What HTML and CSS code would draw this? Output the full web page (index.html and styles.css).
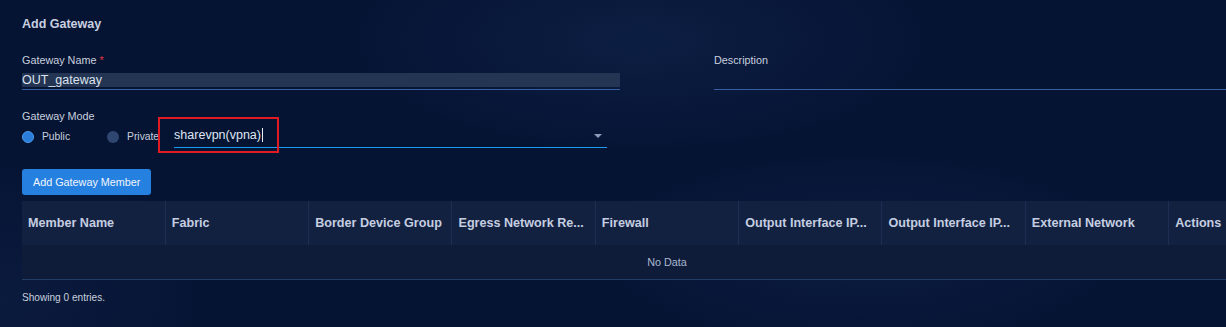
FILE: index.html
```html
<!DOCTYPE html>
<html lang="en">
<head>
  <meta charset="UTF-8" />
  <meta name="viewport" content="width=device-width, initial-scale=1.0" />
  <title>Add Gateway</title>
  <link rel="stylesheet" href="styles.css">
</head>
<body>
<div id="page">
  <h2 class="page-title">Add Gateway</h2>

  <div class="form-grid">
    <div class="field">
      <label class="field-label">Gateway Name <span class="required">*</span></label>
      <div class="field-input">
        <span class="field-value filled">OUT_gateway</span>
      </div>
    </div>
    <div class="field">
      <label class="field-label">Description</label>
      <div class="field-input">
        <span class="field-value"></span>
      </div>
    </div>
  </div>

  <div class="mode-block">
    <label class="field-label">Gateway Mode</label>
    <div class="mode-row">
      <div class="radio-item">
        <span class="radio checked"></span>
        <span class="radio-text">Public</span>
      </div>
      <div class="radio-item">
        <span class="radio"></span>
        <span class="radio-text">Private</span>
      </div>
      <div class="select-box">
        <span class="select-value">sharevpn(vpna)<span class="caret"></span></span>
        <span class="select-arrow"></span>
      </div>
    </div>
  </div>

  <button type="button" class="btn-primary">Add Gateway Member</button>

  <table class="member-table">
    <thead>
      <tr>
        <th>Member Name</th>
        <th>Fabric</th>
        <th>Border Device Group</th>
        <th title="Egress Network Resource">Egress Network Re...</th>
        <th>Firewall</th>
        <th title="Output Interface IP Address">Output Interface IP...</th>
        <th title="Output Interface IP Mask">Output Interface IP...</th>
        <th>External Network</th>
        <th>Actions</th>
      </tr>
    </thead>
    <tbody>
      <tr>
        <td colspan="9" class="empty">No Data</td>
      </tr>
    </tbody>
  </table>

  <p class="table-footer">Showing 0 entries.</p>

  <div class="highlight-box"></div>
</div>
</body>
</html>
```

FILE: styles.css
```css
html, body {
  margin: 0;
  padding: 0;
  height: 100%;
  overflow: hidden;
  font-family: "Liberation Sans", Arial, sans-serif;
  color: #c8d0de;
  background:
    radial-gradient(ellipse 420px 160px at 640px 40px, rgba(30, 60, 110, 0.25), transparent 70%),
    radial-gradient(ellipse 380px 140px at 860px 250px, rgba(30, 60, 110, 0.22), transparent 70%),
    radial-gradient(ellipse 300px 200px at 0px 300px, rgba(30, 55, 100, 0.2), transparent 70%),
    #061434;
}
#page {
  position: relative;
  width: 1290px;
  padding: 16px 0 0 22px;
}
.page-title {
  margin: 0;
  font-size: 12.5px;
  line-height: 16px;
  font-weight: bold;
  color: #c8d0e0;
}
.form-grid {
  display: grid;
  grid-template-columns: 598px 598px;
  column-gap: 94px;
  margin-top: 21px;
}
.field-label {
  display: block;
  font-size: 10.8px;
  line-height: 14px;
  color: #c8d0de;
}
.required {
  color: #e5343d;
}
.field-input {
  margin-top: 6px;
  padding-bottom: 2px;
  border-bottom: 1px solid #3660a0;
}
.field-value {
  display: block;
  height: 14px;
  font-size: 12.5px;
  line-height: 14px;
  color: #dbe2ee;
}
.field-value.filled {
  background: #233552;
}
.mode-block {
  margin-top: 19px;
}
.mode-row {
  display: flex;
  align-items: center;
  margin-top: 2px;
}
.radio-item {
  display: flex;
  align-items: center;
  gap: 8px;
  margin-right: 37px;
}
.radio-item:nth-child(2) {
  margin-right: 15px;
}
.radio {
  width: 12px;
  height: 12px;
  box-sizing: border-box;
  border-radius: 50%;
  background: #2e4670;
  margin-top: 1px;
}
.radio.checked {
  background: #2b7ddc;
  border: 1px solid #4b9cf0;
}
.radio-text {
  font-size: 10.3px;
  line-height: 14px;
  color: #c8d0de;
}
.select-box {
  position: relative;
  width: 433px;
  padding-bottom: 4px;
  border-bottom: 1px solid #1a9af0;
}
.select-value {
  display: inline-block;
  font-size: 12.5px;
  line-height: 16px;
  color: #dfe6f2;
}
.caret {
  display: inline-block;
  width: 1px;
  height: 14px;
  margin-left: 1px;
  vertical-align: -3px;
  background: #e8eef8;
}
.select-arrow {
  position: absolute;
  right: 5px;
  top: 9px;
  border-left: 4.5px solid transparent;
  border-right: 4.5px solid transparent;
  border-top: 4px solid #8d9bb6;
}
.btn-primary {
  display: block;
  margin-top: 21px;
  height: 26px;
  padding: 0 11px;
  border: none;
  border-radius: 3px;
  background: #2580e0;
  color: #f2f6fc;
  font-family: "Liberation Sans", Arial, sans-serif;
  font-size: 10.8px;
  cursor: pointer;
}
.member-table {
  margin-top: 6px;
  width: 1290px;
  border-collapse: collapse;
  table-layout: fixed;
}
.member-table th {
  height: 44px;
  padding: 0 4px 0 6px;
  background: #132140;
  border-left: 1px solid #1c2f52;
  text-align: left;
  font-size: 12.6px;
  font-weight: bold;
  color: #c5cee0;
  white-space: nowrap;
  overflow: hidden;
}
.member-table th:first-child {
  border-left: none;
}
.member-table td.empty {
  height: 34px;
  padding: 0;
  background: #0e1c3a;
  border-bottom: 1px solid #233e66;
  text-align: center;
  font-size: 10.8px;
  color: #aab8d0;
}
.table-footer {
  margin: 11px 0 0;
  font-size: 10.1px;
  line-height: 14px;
  color: #c8d0de;
}
.highlight-box {
  position: absolute;
  left: 158px;
  top: 117px;
  width: 121px;
  height: 36px;
  box-sizing: border-box;
  border: 2px solid #e01b24;
}
```
